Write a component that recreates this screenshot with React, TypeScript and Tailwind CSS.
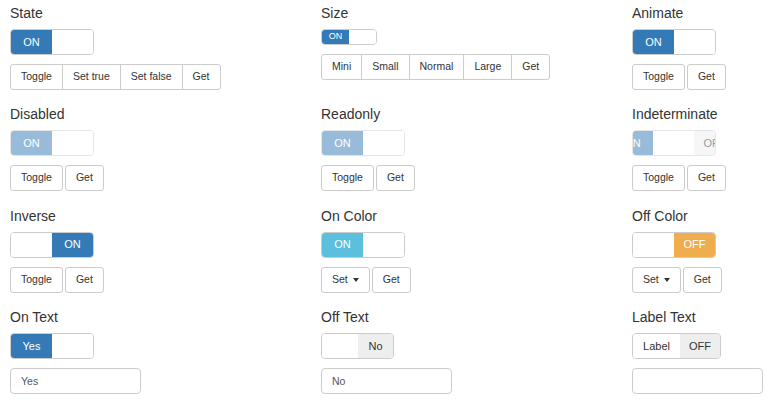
import React from "react";

// Bootstrap-switch style demo grid (static replica)

const font = "font-['Liberation_Sans',Arial,sans-serif]";

function Seg({ w, cls, children }: { w: string; cls: string; children?: React.ReactNode }) {
  return <div className={`${w} shrink-0 h-full flex items-center justify-center ${cls}`}>{children}</div>;
}

function SwitchBox({ cls, children }: { cls: string; children: React.ReactNode }) {
  return (
    <div className={`border border-[#ccc] rounded-[4px] overflow-hidden bg-white ${cls}`}>
      <div className="flex h-full">{children}</div>
    </div>
  );
}

function Btn({ children, cls = "" }: { children: React.ReactNode; cls?: string }) {
  return (
    <button className={`h-[26px] px-[10px] flex items-center bg-white border border-[#ccc] text-[10.5px] text-[#333] ${cls}`}>
      {children}
    </button>
  );
}

function Group({ items }: { items: string[] }) {
  return (
    <div className="flex">
      {items.map((t, i) => (
        <Btn
          key={t}
          cls={`${i > 0 ? "-ml-px" : ""} ${i === 0 ? "rounded-l-[3px]" : ""} ${i === items.length - 1 ? "rounded-r-[3px]" : ""}`}
        >
          {t}
        </Btn>
      ))}
    </div>
  );
}

function Pair({ dropdown = false }: { dropdown?: boolean }) {
  return (
    <div className="flex gap-[2px]">
      <Btn cls="rounded-[3px]">
        {dropdown ? "Set" : "Toggle"}
        {dropdown && (
          <span className="inline-block ml-[5px] w-0 h-0 border-x-[3.5px] border-x-transparent border-t-[4px] border-t-[#333]" />
        )}
      </Btn>
      <Btn cls="rounded-[3px]">Get</Btn>
    </div>
  );
}

function Field({ value }: { value: string }) {
  return (
    <input
      readOnly
      value={value}
      className="w-[131px] h-[26px] border border-[#ccc] rounded-[4px] px-[10px] text-[10.5px] text-[#555] outline-none"
    />
  );
}

function Cell({ title, sw, controls }: { title: string; sw: React.ReactNode; controls: React.ReactNode }) {
  return (
    <div className="flex flex-col items-start">
      <div className="h-[20px] leading-[20px] text-[14px] text-[#333]">{title}</div>
      <div className="mt-[6px]">{sw}</div>
      <div className="mt-[9px]">{controls}</div>
    </div>
  );
}

const blue = "bg-[#337ab7] text-white";
const white = "bg-white";
const grey = "bg-[#eee] text-[#333]";

export default function App() {
  return (
    <div className={`${font} bg-white w-[773px] h-[400px] overflow-hidden`}>
      <div className="grid grid-cols-[311px_311px_1fr] auto-rows-[101.33px] pl-[10px] pt-[3px]">
        <Cell
          title="State"
          sw={
            <SwitchBox cls="w-[84px] h-[26px] text-[11px]">
              <Seg w="w-[41px]" cls={blue}>ON</Seg>
              <Seg w="w-[41px]" cls={white} />
            </SwitchBox>
          }
          controls={<Group items={["Toggle", "Set true", "Set false", "Get"]} />}
        />
        <Cell
          title="Size"
          sw={
            <SwitchBox cls="w-[56px] h-[16px] text-[9px]">
              <Seg w="w-[27px]" cls={blue}>ON</Seg>
              <Seg w="w-[27px]" cls={white} />
            </SwitchBox>
          }
          controls={<Group items={["Mini", "Small", "Normal", "Large", "Get"]} />}
        />
        <Cell
          title="Animate"
          sw={
            <SwitchBox cls="w-[84px] h-[26px] text-[11px]">
              <Seg w="w-[41px]" cls={blue}>ON</Seg>
              <Seg w="w-[41px]" cls={white} />
            </SwitchBox>
          }
          controls={<Pair />}
        />

        <Cell
          title="Disabled"
          sw={
            <SwitchBox cls="w-[84px] h-[26px] text-[11px] opacity-50">
              <Seg w="w-[41px]" cls={blue}>ON</Seg>
              <Seg w="w-[41px]" cls={white} />
            </SwitchBox>
          }
          controls={<Pair />}
        />
        <Cell
          title="Readonly"
          sw={
            <SwitchBox cls="w-[84px] h-[26px] text-[11px] opacity-50">
              <Seg w="w-[41px]" cls={blue}>ON</Seg>
              <Seg w="w-[41px]" cls={white} />
            </SwitchBox>
          }
          controls={<Pair />}
        />
        <Cell
          title="Indeterminate"
          sw={
            <SwitchBox cls="w-[84px] h-[26px] text-[11px] opacity-50">
              <div className="flex h-full -ml-[21px]">
                <Seg w="w-[41px]" cls={blue}>ON</Seg>
                <Seg w="w-[41px]" cls={white} />
                <Seg w="w-[41px]" cls={grey}>OFF</Seg>
              </div>
            </SwitchBox>
          }
          controls={<Pair />}
        />

        <Cell
          title="Inverse"
          sw={
            <SwitchBox cls="w-[84px] h-[26px] text-[11px]">
              <Seg w="w-[41px]" cls={white} />
              <Seg w="w-[41px]" cls={blue}>ON</Seg>
            </SwitchBox>
          }
          controls={<Pair />}
        />
        <Cell
          title="On Color"
          sw={
            <SwitchBox cls="w-[84px] h-[26px] text-[11px]">
              <Seg w="w-[41px]" cls="bg-[#5bc0de] text-white">ON</Seg>
              <Seg w="w-[41px]" cls={white} />
            </SwitchBox>
          }
          controls={<Pair dropdown />}
        />
        <Cell
          title="Off Color"
          sw={
            <SwitchBox cls="w-[84px] h-[26px] text-[11px]">
              <Seg w="w-[41px]" cls={white} />
              <Seg w="w-[41px]" cls="bg-[#f0ad4e] text-white">OFF</Seg>
            </SwitchBox>
          }
          controls={<Pair dropdown />}
        />

        <Cell
          title="On Text"
          sw={
            <SwitchBox cls="w-[84px] h-[26px] text-[11px]">
              <Seg w="w-[41px]" cls={blue}>Yes</Seg>
              <Seg w="w-[41px]" cls={white} />
            </SwitchBox>
          }
          controls={<Field value="Yes" />}
        />
        <Cell
          title="Off Text"
          sw={
            <SwitchBox cls="w-[73px] h-[26px] text-[11px]">
              <Seg w="w-[36px]" cls={white} />
              <Seg w="w-[35px]" cls={grey}>No</Seg>
            </SwitchBox>
          }
          controls={<Field value="No" />}
        />
        <Cell
          title="Label Text"
          sw={
            <SwitchBox cls="w-[89px] h-[26px] text-[11px]">
              <Seg w="w-[47px]" cls="bg-white text-[#333]">Label</Seg>
              <Seg w="w-[40px]" cls={grey}>OFF</Seg>
            </SwitchBox>
          }
          controls={<Field value="" />}
        />
      </div>
    </div>
  );
}
